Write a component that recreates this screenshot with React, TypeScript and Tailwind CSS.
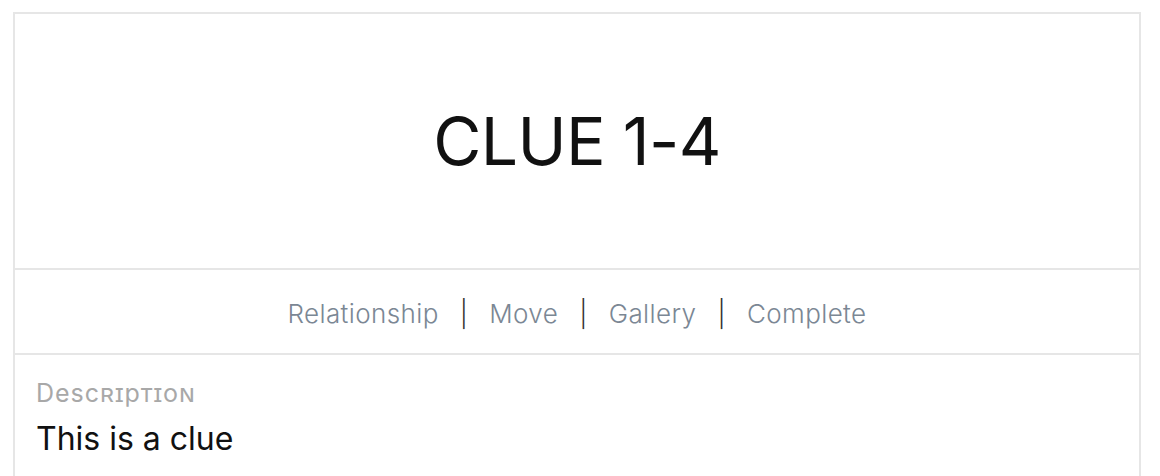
export default function App() {
  const links = ["Relationship", "Move", "Gallery", "Complete"];

  return (
    <div className="min-h-screen bg-white pt-3 pl-[13px] pr-[19px] font-['Inter',sans-serif]">
      <div className="border-2 border-[#e6e6e6] border-b-0">
        <div className="h-[254px] flex items-center justify-center">
          <h1 className="text-[66px] font-normal text-[#111] tracking-[-0.01em] leading-none">
            CLUE 1-4
          </h1>
        </div>

        <nav className="h-[87px] pt-[3px] border-y-2 border-[#e6e6e6] flex items-center justify-center text-[26px] font-light tracking-[0.015em] text-[#7b8794]">
          {links.map((l, i) => (
            <span key={l} className="flex items-center">
              {i > 0 && <span className="mx-[21px] text-[#333]">|</span>}
              <a href="#" className="hover:underline">
                {l}
              </a>
            </span>
          ))}
        </nav>

        <div className="px-[21px] pt-[26px] pb-6">
          <div className="text-[25px] text-[#a8a8a8] tracking-[0.04em] [font-variant:small-caps] leading-none">
            Description
          </div>
          <p className="mt-[17px] text-[32px] text-[#111] leading-none">
            This is a clue
          </p>
        </div>
      </div>
    </div>
  );
}
